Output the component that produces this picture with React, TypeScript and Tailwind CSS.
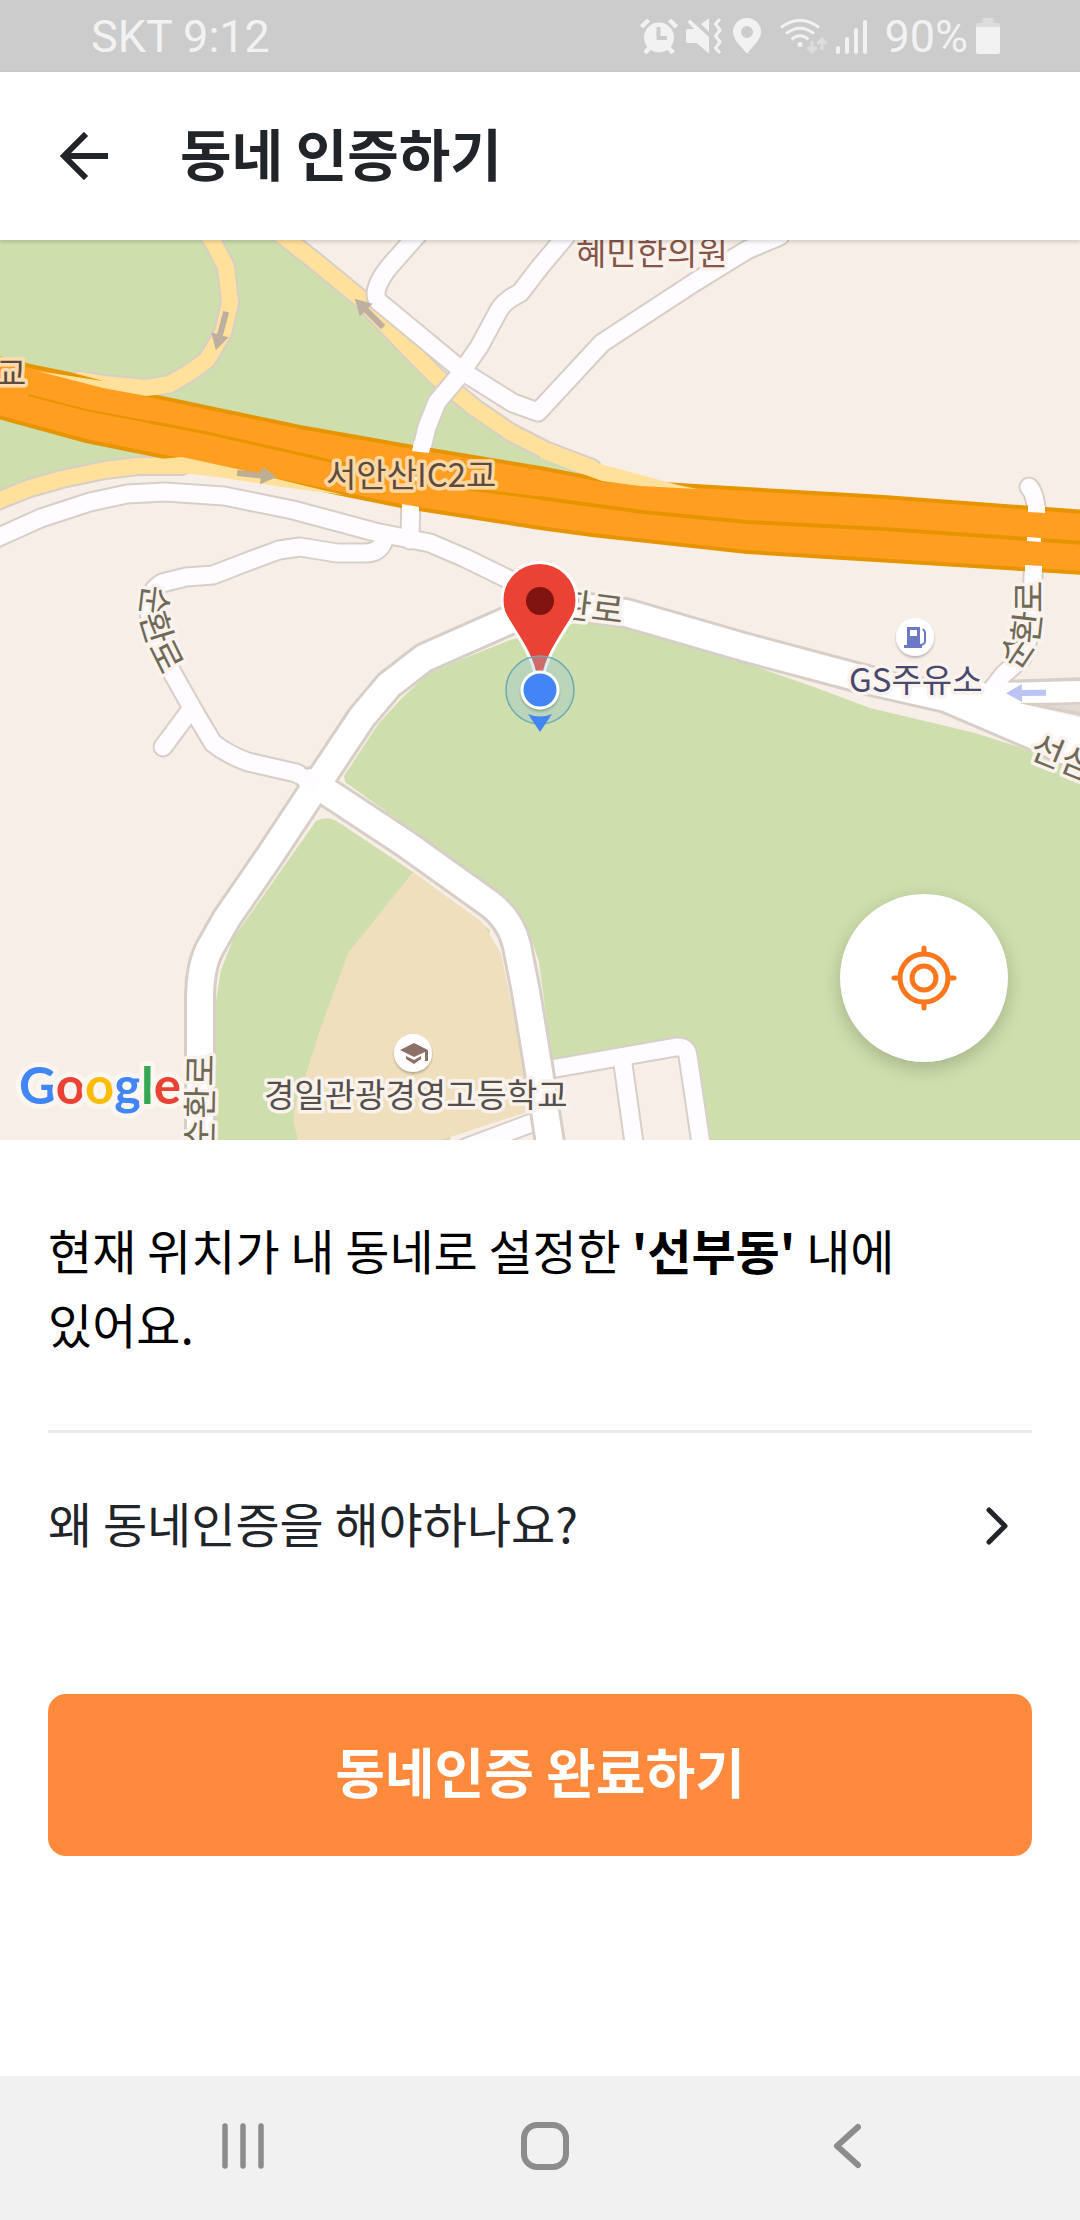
import type { ReactNode } from "react";

const LOCAL_ROADS = [
  "M-10 541 L41 518 L90 502 L127 494 L165 492 L224 496 L293 510 L375 532 L430 543 L465 558 L506 578 L540 596",
  "M384 540 Q380 553 365 553 L337 553 L300 547 L279 550 L244 563 L213 575 L186 577 L162 583 Q150 590 148 606 L152 630 L165 660 L195 713 L213 743 Q228 755 248 762 L296 773 L316 784",
  "M189 712 L163 747",
  "M417 475 L421 452 L427 427 L437 402 L458 377 L479 347 L499 310 Q505 300 520 293 L540 267 L566 236",
  "M411 490 L410 540",
  "M420 232 L389 267 Q371 290 378 301 L413 330 L465 373 L513 403 L538 412 L602 343 L695 282 L747 250 L780 236",
  "M1029 487 Q1037 495 1037 525",
  "M1034 550 L1031 630 L1022 658 L1004 674 L990 692",
  "M465 1148 L537 1121",
  "M545 1070 L676 1047 Q687 1046 688 1056 L702 1150",
  "M622 1057 L635 1150",
];

const MAIN_ROADS = [
  "M200 1150 L200 1000 Q200 966 210 948 L227 918 L269 857 L310 795 L362 717 L389 685 L424 658 L510 620 L570 605 L626 613 L747 648 L867 680 L946 698 L1030 734 L1090 762",
  "M312 782 L406 844 L490 904 Q511 920 517 946 L526 992 L538 1065 L551 1150",
];

const SLIP_ROADS = [
  "M206 232 L212 240 L226 267 L230 303 L223 333 L207 360 L189 373 L170 384 L146 388 L103 384 L80 380",
  "M278 232 L315 261 L360 298 L406 346 L437 377 L475 408 L510 432 L545 450 L592 468",
  "M-10 504 L30 488 L62 479 L105 470 L138 466 L182 466",
];

const HIGHWAY_TOP = "M-5 357 L30 366 L69 374 L148 395 L300 427 L413 447 L540 468 L602 480 L695 486 L884 497 L1085 512";
const HIGHWAY_BOTTOM = "M-5 416 L86 441 L165 457 L337 493 L406 507 L540 528 L592 535 L747 552 L1085 573";
const HIGHWAY_FILL =
  "M-5 357 L30 366 L69 374 L148 395 L300 427 L413 447 L540 468 L602 480 L695 486 L884 497 L1085 512 V573 L747 552 L592 535 L540 528 L406 507 L337 493 L165 457 L86 441 L-5 416 Z";

function Roads({ paths, width, color, casing = 2 }: { paths: string[]; width: number; color: string; casing?: number }) {
  return (
    <g fill="none" strokeLinecap="round" strokeLinejoin="round">
      <g stroke="#d7cfc7" strokeWidth={width + casing * 2}>
        {paths.map((d) => (
          <path key={d} d={d} />
        ))}
      </g>
      <g stroke={color} strokeWidth={width}>
        {paths.map((d) => (
          <path key={d} d={d} />
        ))}
      </g>
    </g>
  );
}

function DirectionArrow({ x, y, angle, color }: { x: number; y: number; angle: number; color: string }) {
  return (
    <path
      d="M-20 -3 H4 V-9 L20 0 L4 9 V3 H-20 Z"
      fill={color}
      transform={`translate(${x} ${y}) rotate(${angle})`}
    />
  );
}

function MapView() {
  return (
    <svg
      viewBox="0 240 1080 900"
      preserveAspectRatio="xMidYMid slice"
      className="block h-full w-full"
      role="img"
      aria-label="지도"
    >
      <defs>
        <path id="road-left" d="M144 584 L140 618 L151 654 L176 704" />
        <path id="road-right" d="M1018 671 L1038 641 L1042 607 L1042 550" />
        <filter id="soft" x="-30%" y="-30%" width="160%" height="160%">
          <feDropShadow dx="0" dy="2" stdDeviation="1" floodOpacity="0.25" />
        </filter>
      </defs>

      {/* land */}
      <rect x="0" y="240" width="1080" height="900" fill="#f7eee8" />
      <path d="M0 240 H286 L315 261 L360 298 L406 346 L437 377 L475 408 L510 432 L592 470 L592 500 L182 470 L138 466 L62 479 L0 501 Z" fill="#cedeac" />
      <path d="M345 782 L344 776 L379 723 L402 698 L430 672 L510 640 L580 622 L626 625 L690 645 L740 661 L822 690 L870 708 L975 733 L1022 748 L1080 775 V1140 H711 L697 1050 L676 1040 L552 1060 L539 962 L530 935 L500 893 Z" fill="#cedeac" />
      <path d="M316 821 Q326 815 338 822 L413 872 L490 930 L450 1140 H216 V1000 L221 970 L234 937 Z" fill="#cedeac" />
      <path d="M413 872 L348 953 L320 1030 L305 1077 Q291 1112 294 1124 L298 1140 H441 L533 1110 L501 953 L482 922 Z" fill="#efdfbd" />

      <Roads paths={SLIP_ROADS} width={16} color="#ffe19b" />
      <Roads paths={LOCAL_ROADS} width={17} color="#fffcff" />

      {/* highway */}
      <path d={HIGHWAY_FILL} fill="#ff9e21" />
      <g fill="none" stroke="#e69500">
        <path d={HIGHWAY_TOP} strokeWidth="4" />
        <path d={HIGHWAY_BOTTOM} strokeWidth="4" />
        <path d="M28 395 L86 410 L207 433" strokeWidth="2" />
        <path d="M150 422 L207 433 L331 461 L475 490 L540 498" strokeWidth="3" />
        <path d="M540 498 L643 512 L747 522 L884 529 L1085 543" strokeWidth="4" />
      </g>
      <g fill="#ffe19b">
        <path d="M37 371 L70 376 L103 381 L146 382 L170 378 L189 382 L172 392 L155 395 L146 396 L103 388 Z" />
        <path d="M540 440 L592 462 L623 470 L678 485 L697 489 L640 486 L602 481 L575 471 L540 458 Z" />
        <path d="M160 459 L182 457 L237 469 L310 487 L344 495 L282 487 L224 478 L182 473 L160 473 Z" />
      </g>

      {/* local roads showing through the highway edges */}
      <g fill="#fffcff">
        <path d="M414 441 L431 444 L429 453 L412 451 Z M402 504 L419 507 V514 H402 Z" />
        <path d="M411 476 L426 478 V482 L411 480 Z M1027 537 L1041 538 V542 L1027 541 Z" />
        <path d="M1028 505 L1045 506 V513 L1028 512 Z M1025 565 L1042 566 V574 H1025 Z" />
      </g>

      {/* side road joining from the right edge */}
      <path d="M1001 682 L1085 679" stroke="#d7cfc7" strokeWidth="4" />
      <path d="M1018 703 L1085 702 V717 Z" fill="#d7cfc7" />

      <Roads paths={MAIN_ROADS} width={26} color="#ffffff" casing={3} />
      <path d="M900 678 L960 684 L1085 681 V702 L1018 703 L1085 719 V745 L1022 725 Z" fill="#fff" />
      <path d="M1046 706 L1085 704 V713 Z" fill="#e3dad1" />
      <path d="M994 688 L1004 674" stroke="#fffcff" strokeWidth="16" />
      <path d="M296 773 L318 786 M500 575 L520 585" stroke="#fffcff" strokeWidth="16" />

      <DirectionArrow x={221} y={331} angle={105} color="#beb0a0" />
      <DirectionArrow x={369} y={313} angle={-135} color="#beb0a0" />
      <DirectionArrow x={257} y={475} angle={6} color="#beae94" />
      <DirectionArrow x={1026} y={693} angle={179} color="#bcc4f3" />

      {/* labels */}
      <g
        className="font-['Noto_Sans_CJK_KR',sans-serif] text-[33px]"
        stroke="#faf2ec"
        strokeWidth="7"
        strokeLinejoin="round"
        paintOrder="stroke"
      >
        <text x="-4" y="385" fill="#5d4b40" stroke="#ffdcb0">교</text>
        <text x="326" y="487" fill="#5d4b40" stroke="#ffd7a2">서안산IC2교</text>
        <text x="576" y="265" fill="#855548">혜민한의원</text>
        <text x="849" y="692" fill="#474a6d">GS주유소</text>
        <text x="264" y="1107" fill="#54504c">경일관광경영고등학교</text>
        <g fill="#6e6a57" className="text-[35px]">
          <text><textPath href="#road-left">순환로</textPath></text>
          <text><textPath href="#road-right">순환로</textPath></text>
          <text transform="translate(212 1151) rotate(-89)">순환로</text>
          <text transform="translate(526 612) rotate(7)">순환로</text>
          <text transform="translate(1028 757) rotate(22)">선삼로</text>
        </g>
      </g>

      {/* places */}
      <g filter="url(#soft)">
        <circle cx="915" cy="637" r="19" fill="#fff" />
        <circle cx="413" cy="1053" r="19" fill="#fff" />
      </g>
      <g fill="#6c79c6">
        <path d="M907 627 H920 V645 H922 V648 H904 V645 H907 Z M910 630 V636 H917 V630 Z" fillRule="evenodd" />
        <path d="M923 629 L925 632 V642 Q924 645 920 645" fill="none" stroke="#6c79c6" strokeWidth="2" />
      </g>
      <g fill="#8c7168">
        <path d="M400 1050 L414 1043 L428 1050 V1061 H425 V1052 L414 1057 Z" />
        <path d="M406 1056 L414 1060 L421 1056 V1059 L414 1064 L406 1059 Z" />
      </g>

      {/* current position */}
      <path
        d="M536 678 C532 656 521 641 510 623 C504 614 502 609 502 600 A37 37 0 0 1 577 600 C577 609 575 614 569 623 C558 641 547 656 543 678 Z"
        fill="#ea4335"
        stroke="#fff"
        strokeWidth="3"
      />
      <circle cx="540" cy="601" r="14" fill="#811411" />
      <circle cx="540" cy="690" r="34" fill="#8fc5d6" fillOpacity="0.32" stroke="#6fa9b4" strokeWidth="1.5" />
      <path d="M528 714 Q540 719 552 714 L540 732 Z" fill="#4285f4" />
      <circle cx="540" cy="690" r="18" fill="#4285f4" stroke="#fff" strokeWidth="3" filter="url(#soft)" />

      <text
        x="19"
        y="1104"
        className="font-['Lato',sans-serif] text-[51px] font-bold"
        stroke="#fbf7f0"
        strokeWidth="10"
        strokeLinejoin="round"
        paintOrder="stroke"
      >
        <tspan fill="#4285f4">G</tspan>
        <tspan fill="#ea4335">o</tspan>
        <tspan fill="#fbbc05">o</tspan>
        <tspan fill="#4285f4">g</tspan>
        <tspan fill="#34a853">l</tspan>
        <tspan fill="#ea4335">e</tspan>
      </text>
    </svg>
  );
}

function StatusIcon({ width, label, children }: { width: number; label: string; children: ReactNode }) {
  return (
    <svg width={width} height="36" viewBox={`0 0 ${width} 36`} fill="none" role="img" aria-label={label}>
      {children}
    </svg>
  );
}

function StatusBar() {
  return (
    <div className="flex h-[72px] items-center justify-between bg-[#cccccc] pr-20 pl-[91px] font-['Roboto',sans-serif] text-[45px] leading-none text-[#f2f2f2]">
      <span>SKT 9:12</span>
      <div className="flex items-center gap-2">
        <StatusIcon width={38} label="알람">
          <circle cx="19" cy="19.5" r="15" fill="#f2f2f2" />
          <path d="M1.5 9 L8.5 2 M29.5 2 L36.5 9 M5 35 L10 29 M33 35 L28 29" stroke="#f2f2f2" strokeWidth="4.5" />
          <path d="M18.5 9 V20 H27" stroke="#ccc" strokeWidth="4" />
        </StatusIcon>
        <StatusIcon width={36} label="진동">
          <path d="M0 13 Q0 11 2 11 H8 L1.5 4 L4 1.5 L23 19 V35.5 L10.5 25 H2 Q0 25 0 23 Z" fill="#f2f2f2" />
          <path d="M15 6 L23 0.5 V14 Z" fill="#f2f2f2" />
          <path d="M34 1 L29.5 6 L34 12 L29.5 18 L34 24 L29.5 30 L34 35" stroke="#f2f2f2" strokeWidth="3" strokeLinejoin="round" />
        </StatusIcon>
        <StatusIcon width={32} label="위치">
          <path
            d="M17 36 C12 29 3 22 3 14 A14 14 0 0 1 31 14 C31 22 22 29 17 36 Z M17 8 A6 6 0 1 0 17 20 A6 6 0 1 0 17 8 Z"
            fill="#f2f2f2"
            fillRule="evenodd"
          />
        </StatusIcon>
        <StatusIcon width={58} label="와이파이">
          <g stroke="#f2f2f2" strokeWidth="3">
            <path d="M11 9.5 Q30 -5 49 9.5 M16 15.5 Q30 5 44 15.5 M21.5 21.5 Q30 14 38.5 21.5" />
          </g>
          <circle cx="30" cy="26.5" r="2.5" fill="#f2f2f2" />
          <path d="M42 23 V33 M37.5 29 L42 34 L46.5 29 M52 32 V22 M47.5 26 L52 21 L56.5 26" stroke="#dddddd" strokeWidth="3" />
        </StatusIcon>
        <StatusIcon width={32} label="신호 세기">
          <path d="M2 30 V34 M11 21 V34 M20 12 V34 M29 4 V34" stroke="#f2f2f2" strokeWidth="4" strokeLinecap="round" />
        </StatusIcon>
        <span className="ml-2">90%</span>
        <StatusIcon width={24} label="배터리">
          <path d="M6.5 0 H17.5 V5 H22 Q24 5 24 7 V9 H0 V7 Q0 5 2 5 H6.5 Z" fill="#dddddd" />
          <path d="M0 9 H24 V34 Q24 36 22 36 H2 Q0 36 0 34 Z" fill="#f2f2f2" />
        </StatusIcon>
      </div>
    </div>
  );
}

function NavButton({ label, children }: { label: string; children: ReactNode }) {
  return (
    <button type="button" aria-label={label}>
      <svg width="48" height="48" viewBox="0 0 48 48" fill="none" stroke="#8c8c8c" strokeLinecap="round">
        {children}
      </svg>
    </button>
  );
}

export default function App() {
  return (
    <div className="flex min-h-screen flex-col bg-white font-['Noto_Sans_CJK_KR',sans-serif] text-[#212429]">
      <StatusBar />

      <header className="relative z-10 flex h-[168px] items-center gap-[72px] bg-white pl-[60px] shadow-[0_2px_4px_rgba(0,0,0,0.15)]">
        <button type="button" aria-label="뒤로">
          <svg width="48" height="48" viewBox="0 0 48 48" fill="none" stroke="#212429" strokeWidth="6">
            <path d="M48 24 H5 M26 2 L4 24 L26 46" />
          </svg>
        </button>
        <h1 className="pb-2 text-[56px] leading-[84px] font-bold">동네 인증하기</h1>
      </header>

      <main className="flex-1">
        <section className="relative h-[900px] overflow-hidden">
          <MapView />
          <button
            type="button"
            aria-label="현재 위치로 이동"
            className="absolute right-[72px] bottom-[78px] flex size-[168px] items-center justify-center rounded-full bg-white shadow-[0_6px_18px_rgba(0,0,0,0.2)]"
          >
            <svg width="66" height="66" viewBox="0 0 66 66" fill="none" stroke="#fb761c" strokeWidth="5" strokeLinecap="round">
              <circle cx="33" cy="33" r="24" />
              <circle cx="33" cy="33" r="12" />
              <path d="M33 3 V8 M33 58 V63 M3 33 H8 M58 33 H63" />
            </svg>
          </button>
        </section>

        <section className="px-12 pt-[72px]">
          <p className="pb-[70px] text-[48px] leading-[74px] break-keep text-black">
            현재 위치가 내 동네로 설정한 <strong>'선부동'</strong> 내에 있어요.
          </p>
          <a href="#why" className="flex h-[189px] items-center justify-between border-t-3 border-[#e9ecef] pr-6">
            <span className="pb-2 text-[48px] leading-[74px]">왜 동네인증을 해야하나요?</span>
            <svg width="22" height="38" viewBox="0 0 22 38" fill="none" stroke="#212429" strokeWidth="5" strokeLinecap="round" strokeLinejoin="round">
              <path d="M3 3 L19 19 L3 35" />
            </svg>
          </a>
          <button type="button" className="mt-[75px] h-[162px] w-full rounded-[18px] bg-[#ff8a3d] pb-2 text-[54px] leading-none font-bold text-white">
            동네인증 완료하기
          </button>
        </section>
      </main>

      <nav className="flex h-[144px] items-center justify-center gap-[254px] bg-[#f1f1f1] pb-1 pl-[10px]">
        <NavButton label="최근 앱">
          <path d="M6 4 V44 M24 4 V44 M42 4 V44" strokeWidth="5.5" />
        </NavButton>
        <NavButton label="홈">
          <rect x="3" y="3" width="42" height="42" rx="13" strokeWidth="6" />
        </NavButton>
        <NavButton label="뒤로 가기">
          <path d="M35 5 L14 24 L35 43" strokeWidth="6" strokeLinejoin="round" />
        </NavButton>
      </nav>
    </div>
  );
}
